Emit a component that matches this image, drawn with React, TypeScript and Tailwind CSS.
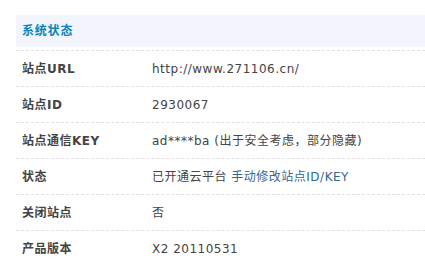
import React from "react";

const rows: { label: string; value: React.ReactNode }[] = [
  { label: "站点URL", value: "http://www.271106.cn/" },
  { label: "站点ID", value: "2930067" },
  { label: "站点通信KEY", value: "ad****ba (出于安全考虑，部分隐藏)" },
  {
    label: "状态",
    value: (
      <>
        已开通云平台 <a className="text-[#336699]">手动修改站点ID/KEY</a>
      </>
    ),
  },
  { label: "关闭站点", value: "否" },
  { label: "产品版本", value: "X2 20110531" },
];

export default function App() {
  return (
    <div
      className="w-[425px] h-[261px] overflow-hidden bg-white text-[12px] text-[#444]"
      style={{ fontFamily: '"DejaVu Sans", Verdana, "Noto Sans CJK SC", sans-serif' }}
    >
      <div className="ml-4 pt-[15px]">
        <div className="h-[32px] bg-[#f2f6fc] flex items-center pl-[6px] font-bold text-[#0a84b8] tracking-[0.8px]">
          系统状态
        </div>
        <div className="h-[4px] border-b border-dashed border-[#e0e0e0]" />
        {rows.map((r) => (
          <div
            key={r.label}
            className="h-[36px] flex items-center border-b border-dashed border-[#e0e0e0]"
          >
            <div className="w-[136px] shrink-0 pl-[6px] font-bold text-[#444] tracking-[0.5px]">{r.label}</div>
            <div className="whitespace-nowrap tracking-[0.5px]">{r.value}</div>
          </div>
        ))}
      </div>
    </div>
  );
}
